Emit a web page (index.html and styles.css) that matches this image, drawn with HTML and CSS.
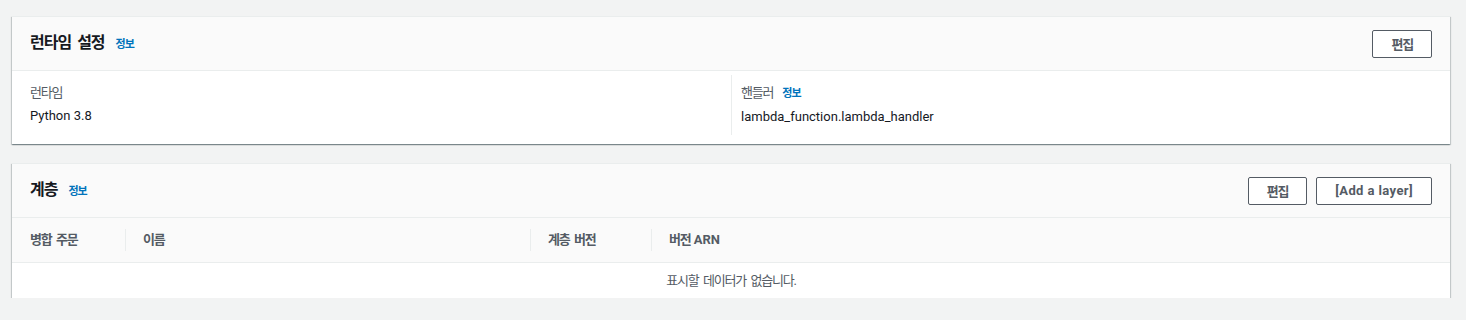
FILE: index.html
```html
<!DOCTYPE html>
<html lang="ko">
	<head>
		<meta charset="UTF-8" />
		<meta name="viewport" content="width=device-width, initial-scale=1.0" />
		<title>런타임 설정</title>
		<link rel="stylesheet" href="styles.css">
	</head>

	<body>
		<div class="container">
			<div class="card">
				<div class="card-header">
					<h2 class="title"><span class="ko">런타임 설정</span> <a class="info" href="#">정보</a></h2>
					<div class="actions">
						<button class="btn ko">편집</button>
					</div>
				</div>
				<div class="columns">
					<div class="column">
						<div class="label"><span class="ko">런타임</span></div>
						<div class="value">Python 3.8</div>
					</div>
					<div class="column divided">
						<div class="label"><span class="ko">핸들러</span> <a class="info" href="#">정보</a></div>
						<div class="value">lambda_function.lambda_handler</div>
					</div>
				</div>
			</div>

			<div class="card">
				<div class="card-header">
					<h2 class="title"><span class="ko">계층</span> <a class="info" href="#">정보</a></h2>
					<div class="actions">
						<button class="btn ko">편집</button>
						<button class="btn latin">[Add a layer]</button>
					</div>
				</div>
				<div class="table-head">
					<div class="th"><span class="ko">병합 주문</span></div>
					<div class="th"><span class="ko">이름</span></div>
					<div class="th"><span class="ko">계층 버전</span></div>
					<div class="th"><span class="ko">버전</span> ARN</div>
				</div>
				<div class="empty"><span class="ko">표시할 데이터가 없습니다.</span></div>
			</div>
		</div>
	</body>
</html>
```

FILE: styles.css
```css
:root {
	--bg-color: #f2f3f3;
	--card-bg: #ffffff;
	--header-bg: #fafafa;
	--text-color: #16191f;
	--label-color: #545b64;
	--muted-color: #687078;
	--link-color: #0073bb;
	--line-color: #eaeded;
}

body {
	font-family: Roboto, "Noto Sans CJK KR", sans-serif;
	font-size: 13px;
	line-height: 20px;
	margin: 0;
	background-color: var(--bg-color);
	color: var(--text-color);
}

.ko {
	letter-spacing: -1.2px;
	word-spacing: 2.5px;
}

.container {
	display: flex;
	flex-direction: column;
	gap: 19px;
	padding: 16px 16px 0 12px;
}

.card {
	background-color: var(--card-bg);
	border-top: 1px solid var(--line-color);
	box-shadow: 0 1px 1px 0 rgba(0, 28, 36, 0.3),
		1px 1px 1px 0 rgba(0, 28, 36, 0.15),
		-1px 1px 1px 0 rgba(0, 28, 36, 0.15);
}

.card-header {
	display: flex;
	align-items: center;
	justify-content: space-between;
	height: 53px;
	padding: 0 18px;
	background-color: var(--header-bg);
	border-bottom: 1px solid var(--line-color);
}

.title {
	margin: 0;
	font-size: 16px;
	font-weight: 700;
	line-height: 22px;
	display: flex;
	align-items: baseline;
	gap: 11px;
}

.title .ko {
	letter-spacing: -1px;
	word-spacing: 3px;
}

.info {
	font-size: 11px;
	font-weight: 700;
	letter-spacing: -1px;
	color: var(--link-color);
	text-decoration: none;
}

.actions {
	display: flex;
	gap: 9px;
}

.btn {
	font-family: inherit;
	font-size: 13px;
	font-weight: 700;
	color: var(--label-color);
	background-color: #fff;
	border: 1px solid var(--label-color);
	border-radius: 2px;
	height: 28px;
	padding: 0 18px;
	cursor: pointer;
}

.btn.latin {
	letter-spacing: 0.4px;
}

.columns {
	display: grid;
	grid-template-columns: 1fr 1fr;
	height: 73px;
}

.column {
	padding: 12px 18px 0;
}

.column.divided {
	margin: 4px 0 9px;
	padding: 8px 9px 0;
	border-left: 1px solid var(--line-color);
}

.label {
	color: var(--label-color);
	display: flex;
	align-items: baseline;
	gap: 9px;
}

.value {
	margin-top: 3px;
}

.table-head {
	display: grid;
	grid-template-columns: 113px 405px 121px 1fr;
	background-color: var(--header-bg);
	border-bottom: 1px solid var(--line-color);
	padding: 11px 0;
	line-height: 22px;
}

.th {
	font-weight: 700;
	color: var(--label-color);
	padding-left: 17px;
	border-left: 1px solid var(--line-color);
}

.th:first-child {
	padding-left: 18px;
	border-left: none;
}

.empty {
	text-align: center;
	color: var(--label-color);
	height: 35px;
	line-height: 35px;
}
```
